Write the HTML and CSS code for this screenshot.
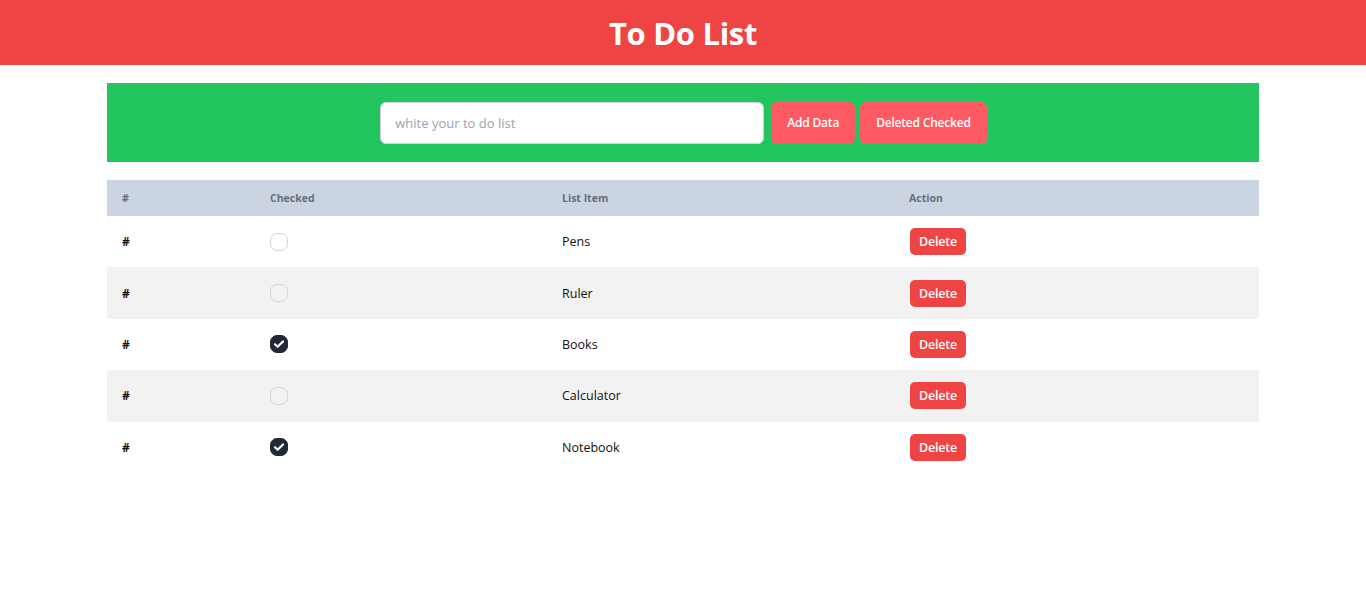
FILE: index.html
```html
<!DOCTYPE html>
<html lang="en">
<head>
<meta charset="utf-8">
<title>To Do List</title>
<link rel="stylesheet" href="styles.css">
</head>
<body>
<header class="topbar"><h1>To Do List</h1></header>
<main class="container">
  <section class="entry">
    <input class="entry-input" type="text" placeholder="white your to do list">
    <button class="btn-soft">Add Data</button>
    <button class="btn-soft">Deleted Checked</button>
  </section>
  <table class="todo">
    <thead>
      <tr><th class="c1">#</th><th class="c2">Checked</th><th class="c3">List Item</th><th class="c4">Action</th></tr>
    </thead>
    <tbody>
      <tr><td class="num">#</td><td><span class="box"></span></td><td>Pens</td><td><button class="btn-del">Delete</button></td></tr>
      <tr><td class="num">#</td><td><span class="box"></span></td><td>Ruler</td><td><button class="btn-del">Delete</button></td></tr>
      <tr><td class="num">#</td><td><span class="box on"><svg viewBox="0 0 18 18" width="18" height="18"><path d="M5 9.3l2.6 2.5L13 6.5" fill="none" stroke="#fff" stroke-width="2.2" stroke-linecap="round" stroke-linejoin="round"/></svg></span></td><td>Books</td><td><button class="btn-del">Delete</button></td></tr>
      <tr><td class="num">#</td><td><span class="box"></span></td><td>Calculator</td><td><button class="btn-del">Delete</button></td></tr>
      <tr><td class="num">#</td><td><span class="box on"><svg viewBox="0 0 18 18" width="18" height="18"><path d="M5 9.3l2.6 2.5L13 6.5" fill="none" stroke="#fff" stroke-width="2.2" stroke-linecap="round" stroke-linejoin="round"/></svg></span></td><td>Notebook</td><td><button class="btn-del">Delete</button></td></tr>
    </tbody>
  </table>
</main>
</body>
</html>
```
FILE: styles.css
```css
* { box-sizing: border-box; }
html, body { margin: 0; padding: 0; background: #fff; }
body { font-family: "Open Sans", "Noto Sans", sans-serif; color: #111; }

.topbar {
  height: 65px;
  background: #ef4444;
  display: flex;
  align-items: center;
  justify-content: center;
}
.topbar h1 {
  margin: 0;
  color: #fff;
  font-size: 31px;
  font-weight: 700;
  letter-spacing: -0.3px;
  line-height: 1;
  padding-top: 2px;
}

.container {
  width: 1152px;
  margin: 18px auto 0;
}

.entry {
  height: 79px;
  background: #22c55e;
  display: flex;
  align-items: center;
  justify-content: center;
  gap: 5px;
  padding-left: 1px;
}
.entry-input {
  width: 384px;
  height: 42px;
  border: 1px solid #d1d5db;
  border-radius: 6px;
  padding: 0 14px;
  font-family: inherit;
  font-size: 13px;
  color: #333;
  outline: none;
  margin-right: 2px;
}
.entry-input::placeholder { color: #9ca3af; }

.btn-soft {
  height: 42px;
  border: 0;
  border-radius: 6px;
  background: #ff5a63;
  color: #fff;
  font-family: inherit;
  font-size: 12px;
  font-weight: 600;
  padding: 0 16px;
  letter-spacing: -0.2px;
}

.todo {
  width: 100%;
  border-collapse: collapse;
  margin-top: 18px;
  font-size: 12.5px;
}
.todo th {
  height: 36px;
  background: #cbd5e1;
  color: #64707f;
  font-size: 10.5px;
  font-weight: 700;
  text-align: left;
  padding: 0 15px;
}
.c1 { width: 148px; }
.c2 { width: 292px; }
.c3 { width: 347px; }
.todo td {
  height: 51.4px;
  padding: 0 15px;
  vertical-align: middle;
  color: #111;
}
.todo tbody tr:nth-child(even) td { background: #f2f2f2; }
.todo td.num { font-weight: 700; font-size: 12px; }

.box {
  display: block;
  width: 18px;
  height: 18px;
  border: 1px solid #d4d4d8;
  border-radius: 7px;
  background: transparent;
}
.box.on {
  background: #1f2937;
  border-color: #1f2937;
  position: relative;
}
.box.on svg { position: absolute; left: -1px; top: -1px; }

.btn-del {
  height: 27px;
  border: 0;
  border-radius: 5px;
  background: #ef4444;
  color: #fff;
  font-family: inherit;
  font-size: 12.5px;
  font-weight: 600;
  padding: 0 9px;
  letter-spacing: -0.2px;
  margin-left: 1px;
}
```
